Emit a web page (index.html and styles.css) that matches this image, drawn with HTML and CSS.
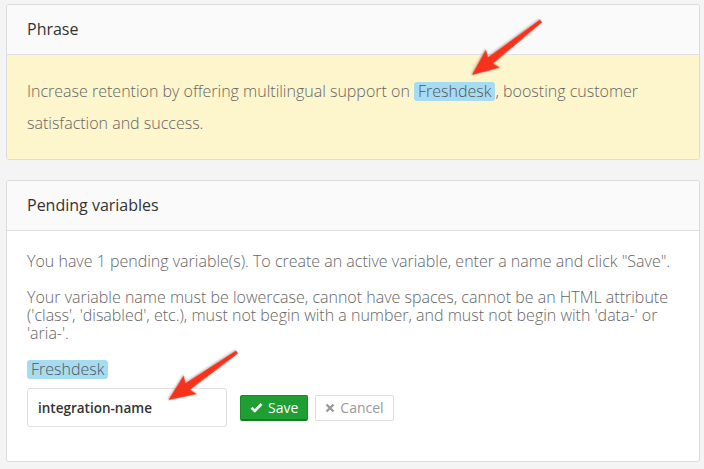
FILE: index.html
```html
<!DOCTYPE html>
<html>
<head>
<meta charset="utf-8">
<link rel="stylesheet" href="styles.css">
</head>
<body>
<div class="page">
  <section class="panel">
    <div class="panel-head">Phrase</div>
    <div class="panel-body phrase">
      <p>Increase retention by offering multilingual support on <span class="tag">Freshdesk</span>, boosting customer satisfaction and success.</p>
    </div>
  </section>
  <section class="panel">
    <div class="panel-head">Pending variables</div>
    <div class="panel-body pending">
      <p>You have 1 pending variable(s). To create an active variable, enter a name and click "Save".</p>
      <p>Your variable name must be lowercase, cannot have spaces, cannot be an HTML attribute ('class', 'disabled', etc.), must not begin with a number, and must not begin with 'data-' or 'aria-'.</p>
      <div class="tagrow"><span class="tag">Freshdesk</span></div>
      <div class="form">
        <input class="name" type="text" value="integration-name">
        <button class="btn save"><svg width="13" height="11" viewBox="0 0 13 11"><path d="M1.5 5.8 L4.8 9 L11.5 2" fill="none" stroke="#fff" stroke-width="2.6"/></svg>Save</button>
        <button class="btn cancel"><svg width="10" height="10" viewBox="0 0 10 10"><path d="M1.5 1.5 L8.5 8.5 M8.5 1.5 L1.5 8.5" stroke="#999" stroke-width="2.4"/></svg>Cancel</button>
      </div>
    </div>
  </section>
</div>
<svg class="arrows" width="704" height="469" viewBox="0 0 704 469">
  <defs>
    <filter id="sh" x="-20%" y="-20%" width="140%" height="140%">
      <feDropShadow dx="0" dy="1" stdDeviation="1.2" flood-color="#000" flood-opacity="0.3"/>
    </filter>
  </defs>
  <g transform="translate(541,21) rotate(142)" filter="url(#sh)">
    <polygon points="0,-1.8 64,-4 61,-11.5 88,0 61,11.5 64,4 0,1.8" fill="#f7321c"/>
  </g>
  <g transform="translate(237,352) rotate(145)" filter="url(#sh)">
    <polygon points="0,-1.8 60,-4 57,-11.5 84,0 57,11.5 60,4 0,1.8" fill="#f7321c"/>
  </g>
</svg>
</body>
</html>
```

FILE: styles.css
```css
html, body {
  margin: 0;
  padding: 0;
  background: #f4f4f4;
}
body {
  font-family: "Open Sans", sans-serif;
  color: #666;
  width: 704px;
  height: 469px;
  overflow: hidden;
  position: relative;
}
.page {
  padding: 4px 4px 0 6px;
  display: flex;
  flex-direction: column;
  gap: 20px;
}
.panel {
  border: 1px solid #dcdcdc;
  border-radius: 3px;
  background: #fff;
  overflow: hidden;
}
.panel-head {
  background: #fafafa;
  border-bottom: 1px solid #e0e0e0;
  height: 49px;
  line-height: 49px;
  padding: 0 20px;
  font-size: 16px;
  color: #333;
}
.phrase {
  background: #fdf5cb;
  padding: 20px 20px 20px;
}
.phrase p {
  margin: 0;
  font-size: 16px;
  line-height: 32px;
  color: #666;
  font-weight: 300;
}
.tag {
  display: inline-block;
  background: #a6dcf2;
  border-radius: 3px;
  color: #555;
  padding: 0 4px;
  line-height: 19px;
  font-weight: 300;
}
.pending {
  padding: 21px 20px 34px;
  font-size: 16px;
}
.pending p {
  margin: 0 0 18px;
  line-height: 18px;
  font-weight: 300;
}
.tagrow {
  line-height: 19px;
  height: 19px;
}
.form {
  margin-top: 9px;
  display: flex;
  align-items: center;
}
.name {
  width: 200px;
  height: 39px;
  box-sizing: border-box;
  border: 1px solid #ddd;
  border-radius: 3px;
  padding: 0 10px;
  font-family: "Open Sans", sans-serif;
  font-size: 13.5px;
  font-weight: 600;
  color: #333;
}
.btn {
  height: 26px;
  box-sizing: border-box;
  border-radius: 2px;
  font-family: "Open Sans", sans-serif;
  font-size: 14px;
  display: inline-flex;
  align-items: center;
  gap: 5px;
  padding: 0 9px;
}
.save {
  margin-left: 13px;
  background: #1f9e32;
  border: 1px solid #1a8a2a;
  border-bottom: 2px solid #177a25;
  color: #fff;
}
.cancel {
  margin-left: 7px;
  background: #fff;
  border: 1px solid #ddd;
  color: #999;
}
.arrows {
  position: absolute;
  left: 0;
  top: 0;
  pointer-events: none;
}
```
